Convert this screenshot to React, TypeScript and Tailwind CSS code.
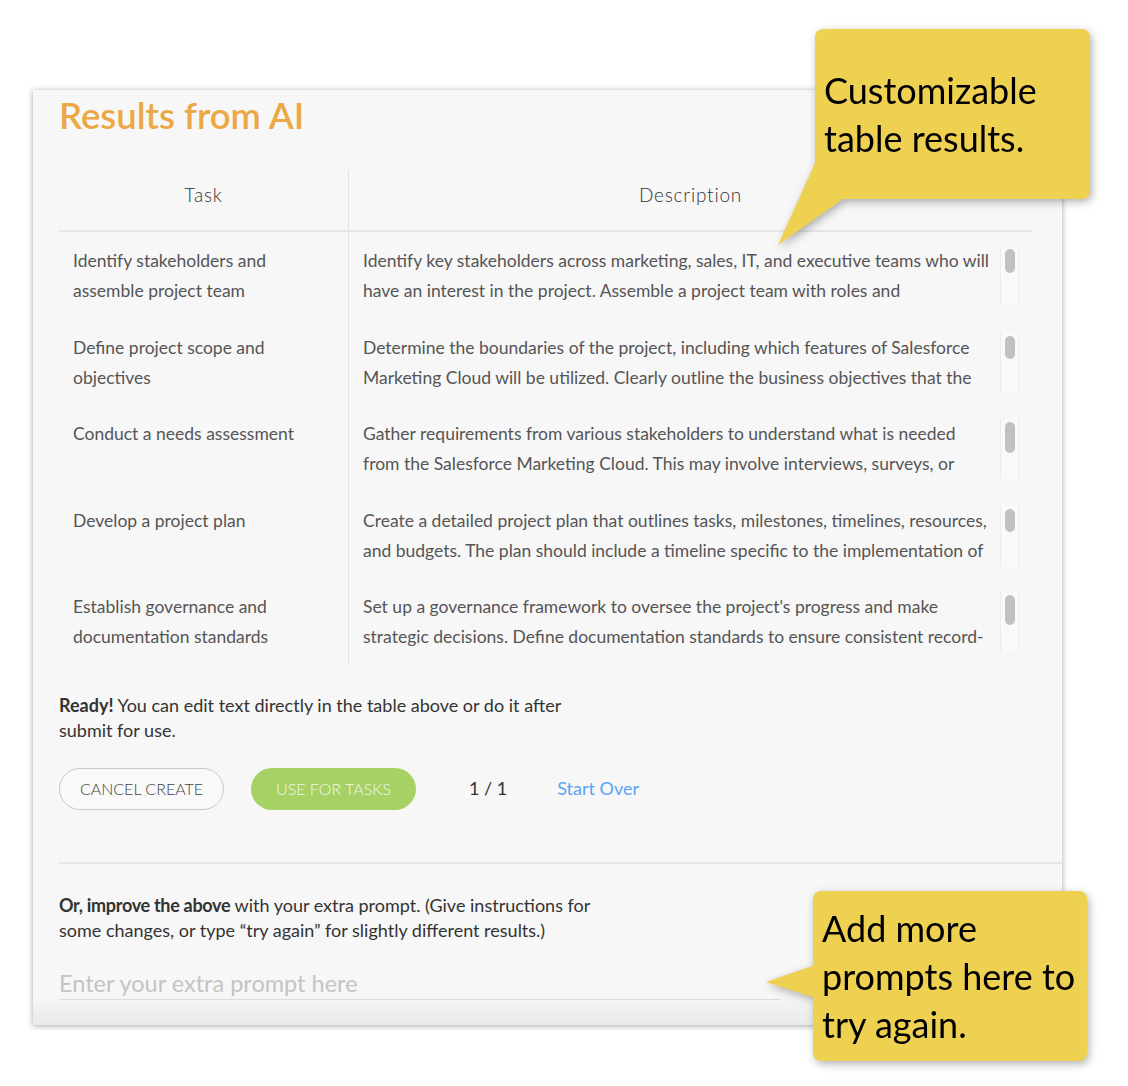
const ROWS = [
  {
    task: ['Identify stakeholders and', 'assemble project team'],
    desc: [
      'Identify key stakeholders across marketing, sales, IT, and executive teams who will',
      'have an interest in the project. Assemble a project team with roles and',
    ],
    thumb: 'h-[24px]',
  },
  {
    task: ['Define project scope and', 'objectives'],
    desc: [
      'Determine the boundaries of the project, including which features of Salesforce',
      'Marketing Cloud will be utilized. Clearly outline the business objectives that the',
    ],
    thumb: 'h-[23px]',
  },
  {
    task: ['Conduct a needs assessment'],
    desc: [
      'Gather requirements from various stakeholders to understand what is needed',
      'from the Salesforce Marketing Cloud. This may involve interviews, surveys, or',
    ],
    thumb: 'h-[31px]',
  },
  {
    task: ['Develop a project plan'],
    desc: [
      'Create a detailed project plan that outlines tasks, milestones, timelines, resources,',
      'and budgets. The plan should include a timeline specific to the implementation of',
    ],
    thumb: 'h-[23px]',
  },
  {
    task: ['Establish governance and', 'documentation standards'],
    desc: [
      "Set up a governance framework to oversee the project's progress and make",
      'strategic decisions. Define documentation standards to ensure consistent record-',
    ],
    thumb: 'h-[30px]',
  },
];

export default function App() {
  return (
    <div className="relative h-[1086px] w-[1128px] overflow-hidden bg-white pl-[33px] pt-[90px] font-['Lato',sans-serif]">
      <div className="h-[935px] w-[1029px] bg-[linear-gradient(to_bottom,#f7f7f7_905px,#e9e9e9)] pl-[26px] pr-[30px] pt-[2px] shadow-[0_1px_6px_rgba(0,0,0,0.35)]">
        <h1 className="text-[36.5px] font-semibold leading-[46px] text-[#eba845]">Results from AI</h1>

        <div className="mt-[32px] w-[973px]">
          <div className="flex h-[62px] border-b-2 border-[#e6e6e6] text-[19px] font-light leading-[24px] tracking-[0.8px] text-[#333]">
            <div className="w-[289px] pt-[13px] text-center">Task</div>
            <div className="flex-1 border-l border-[#e3e3e3] pt-[13px] text-center">Description</div>
          </div>
          {ROWS.map((row) => (
            <div key={row.task[0]} className="flex h-[86.6px]">
              <div className="w-[289px] pl-[14px] pt-[14px] text-[17.5px] leading-[30px] text-[#555]">
                {row.task.map((line) => (
                  <div key={line}>{line}</div>
                ))}
              </div>
              <div className="flex flex-1 border-l border-[#e3e3e3] pl-[14px] pt-[14px]">
                <div className="h-[60px] w-[637px] overflow-hidden whitespace-nowrap text-[17.5px] leading-[30px] text-[#555]">
                  {row.desc.map((line) => (
                    <div key={line}>{line}</div>
                  ))}
                </div>
                <div className="h-[60px] w-[19px] border-x border-[#ececec] bg-[#f9f9f9] px-[4px] pt-[3px]">
                  <div className={`${row.thumb} w-[10px] rounded-full bg-[#c1c1c1]`} />
                </div>
              </div>
            </div>
          ))}
        </div>

        <div className="mt-[28px] text-[18px] leading-[25px] text-[#333]">
          <div>
            <span className="font-bold">Ready!</span> You can edit text directly in the table above or do it after
          </div>
          <div>submit for use.</div>
        </div>

        <div className="mt-[25px] flex h-[42px] items-center">
          <button className="h-[42px] w-[165px] rounded-full border border-[#c8c8c8] bg-[#f9f9f9] text-[16px] font-light text-[#444]">
            CANCEL CREATE
          </button>
          <button className="ml-[27px] h-[42px] w-[165px] rounded-full bg-[#a5d165] text-[16px] font-light text-[#f3f8ea]">
            USE FOR TASKS
          </button>
          <span className="ml-[53px] text-[18px] text-[#333]">1 / 1</span>
          <span className="ml-[50px] text-[18px] text-[#5ba3f3]">Start Over</span>
        </div>

        <div className="-mr-[30px] mt-[52px] h-[2px] bg-[#e6e6e6]" />

        <div className="mt-[29px] text-[18px] leading-[25px] text-[#333]">
          <div>
            <span className="font-bold tracking-[-0.3px]">Or, improve the above</span> with your extra prompt. (Give instructions for
          </div>
          <div>some changes, or type “try again” for slightly different results.)</div>
        </div>

        <input
          className="mt-[25px] h-[32px] w-[722px] border-b border-[#dcdcdc] bg-transparent text-[23.5px] leading-[30px] text-[#333] outline-none placeholder:text-[#c4c4c4]"
          placeholder="Enter your extra prompt here"
        />
      </div>

      <div className="absolute left-[778px] top-[29px] h-[216px] w-[312px] drop-shadow-[2px_3px_4px_rgba(0,0,0,0.3)]">
        <svg className="absolute inset-0" width="312" height="216" viewBox="0 0 312 216">
          <polygon points="37,134 65,170 0,216" fill="#efd152" />
        </svg>
        <div className="absolute left-[37px] top-0 flex h-[170px] w-[275px] items-center rounded-[8px] bg-[#efd152] pl-[9px] text-[36px] leading-[48px] text-black">
          <div>
            Customizable
            <br />
            table results.
          </div>
        </div>
      </div>

      <div className="absolute left-[766px] top-[891px] h-[170px] w-[321px] drop-shadow-[2px_3px_4px_rgba(0,0,0,0.3)]">
        <svg className="absolute inset-0" width="321" height="170" viewBox="0 0 321 170">
          <polygon points="49,74 0,91 49,107" fill="#efd152" />
        </svg>
        <div className="absolute left-[47px] top-0 flex h-[170px] w-[274px] items-center rounded-[8px] bg-[#efd152] pl-[9px] text-[36px] leading-[48px] text-black">
          <div>
            Add more
            <br />
            prompts here to
            <br />
            try again.
          </div>
        </div>
      </div>
    </div>
  );
}
